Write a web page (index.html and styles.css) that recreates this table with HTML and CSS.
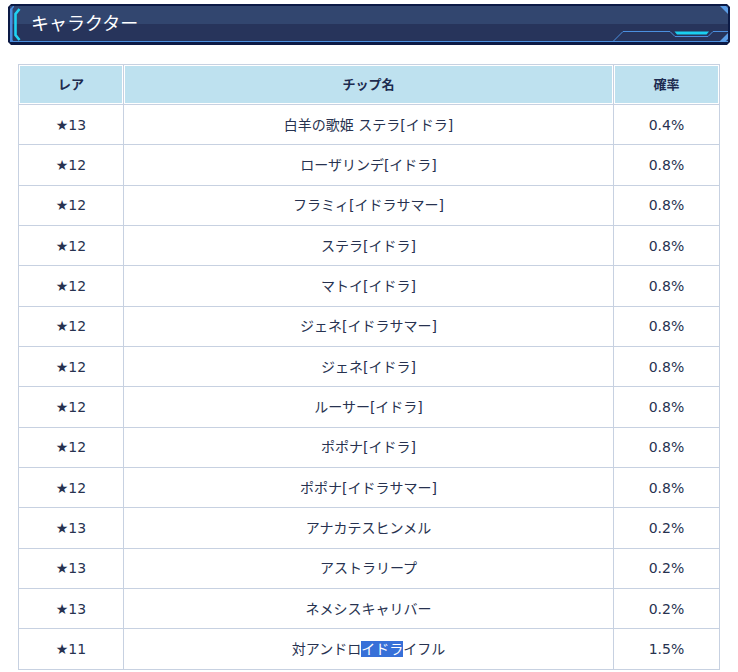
FILE: index.html
```html
<!DOCTYPE html>
<html lang="ja">
<head>
<meta charset="utf-8">
<title>キャラクター</title>
<link rel="stylesheet" href="styles.css">
</head>
<body>
<div class="page">
  <h2 class="banner">
    <svg class="banner-bg" width="722" height="41" viewBox="0 0 722 41" aria-hidden="true">
      <polygon points="3,0 719,0 722,3 722,38 719,41 3,41 0,38 0,3" fill="#0c1a45"/>
      <rect x="2" y="2" width="718" height="18" fill="#32466f"/>
      <rect x="2" y="20" width="718" height="17" fill="#27345b"/>
      <rect x="2" y="37" width="718" height="1" fill="#4b8fdf"/>
      <polygon points="2,5 5,2 6,2 6,3 4.5,5 4.5,36 6,38 2,38" fill="#4a8ede"/>
      <polyline points="11.5,5 7.5,10 7.5,31 11.5,36" fill="none" stroke="#1fd2f2" stroke-width="2.6"/>
      <polygon points="712,2 718,2 720,4 720,10" fill="#5b9de6"/>
      <polygon points="720,29 720,35 717,38 711,38" fill="#5b9de6"/>
      <polyline points="605,37.5 615,27.5 662,27.5 667,32.5 700,32.5 705,27.5 720,27.5" fill="none" stroke="#4b8fdf" stroke-width="1"/>
      <polygon points="666.5,27.5 701,27.5 698.5,30.5 669,30.5" fill="#1ad0f0"/>
    </svg>
    <span class="banner-title">キャラクター</span>
  </h2>

  <table class="chips">
    <colgroup>
      <col class="c-rare">
      <col class="c-name">
      <col class="c-rate">
    </colgroup>
    <thead>
      <tr><th>レア</th><th>チップ名</th><th>確率</th></tr>
    </thead>
    <tbody>
      <tr><td>★13</td><td>白羊の歌姫 ステラ[イドラ]</td><td>0.4%</td></tr>
      <tr><td>★12</td><td>ローザリンデ[イドラ]</td><td>0.8%</td></tr>
      <tr><td>★12</td><td>フラミィ[イドラサマー]</td><td>0.8%</td></tr>
      <tr><td>★12</td><td>ステラ[イドラ]</td><td>0.8%</td></tr>
      <tr><td>★12</td><td>マトイ[イドラ]</td><td>0.8%</td></tr>
      <tr><td>★12</td><td>ジェネ[イドラサマー]</td><td>0.8%</td></tr>
      <tr><td>★12</td><td>ジェネ[イドラ]</td><td>0.8%</td></tr>
      <tr><td>★12</td><td>ルーサー[イドラ]</td><td>0.8%</td></tr>
      <tr><td>★12</td><td>ポポナ[イドラ]</td><td>0.8%</td></tr>
      <tr><td>★12</td><td>ポポナ[イドラサマー]</td><td>0.8%</td></tr>
      <tr><td>★13</td><td>アナカテスヒンメル</td><td>0.2%</td></tr>
      <tr><td>★13</td><td>アストラリープ</td><td>0.2%</td></tr>
      <tr><td>★13</td><td>ネメシスキャリバー</td><td>0.2%</td></tr>
      <tr><td>★11</td><td>対アンドロ<span class="sel">イドラ</span>イフル</td><td>1.5%</td></tr>
    </tbody>
  </table>
</div>
</body>
</html>
```

FILE: styles.css
```css
html, body {
  margin: 0;
  padding: 0;
  background: #ffffff;
}

body {
  font-family: "DejaVu Sans", "Noto Sans CJK JP", sans-serif;
  color: #242f4c;
}

.page {
  padding: 4px 8px 0 8px;
}

.banner {
  position: relative;
  margin: 0;
  width: 722px;
  height: 41px;
  display: flex;
  align-items: center;
  font-weight: normal;
}

.banner-bg {
  position: absolute;
  left: 0;
  top: 0;
  display: block;
}

.banner-title {
  position: relative;
  margin-left: 23px;
  margin-top: -2px;
  font-size: 18px;
  line-height: 20px;
  color: #ffffff;
}

.chips {
  margin: 19px 0 0 10px;
  width: 701px;
  table-layout: fixed;
  border-collapse: collapse;
  font-size: 14px;
}

.c-rare { width: 105px; }
.c-name { width: 490px; }
.c-rate { width: 106px; }

.chips th,
.chips td {
  border: 1px solid #c7d1e1;
  text-align: center;
  padding: 0;
}

.chips th {
  background: #bee1ef;
  box-shadow: inset 0 0 0 1px #ffffff;
  font-size: 13px;
  font-weight: bold;
  color: #1d2b50;
  height: 39px;
  line-height: 39px;
}

.chips td {
  height: 39.33px;
  line-height: 20px;
  color: #273250;
}

.sel {
  background: #3770d8;
  color: #ffffff;
}
```
